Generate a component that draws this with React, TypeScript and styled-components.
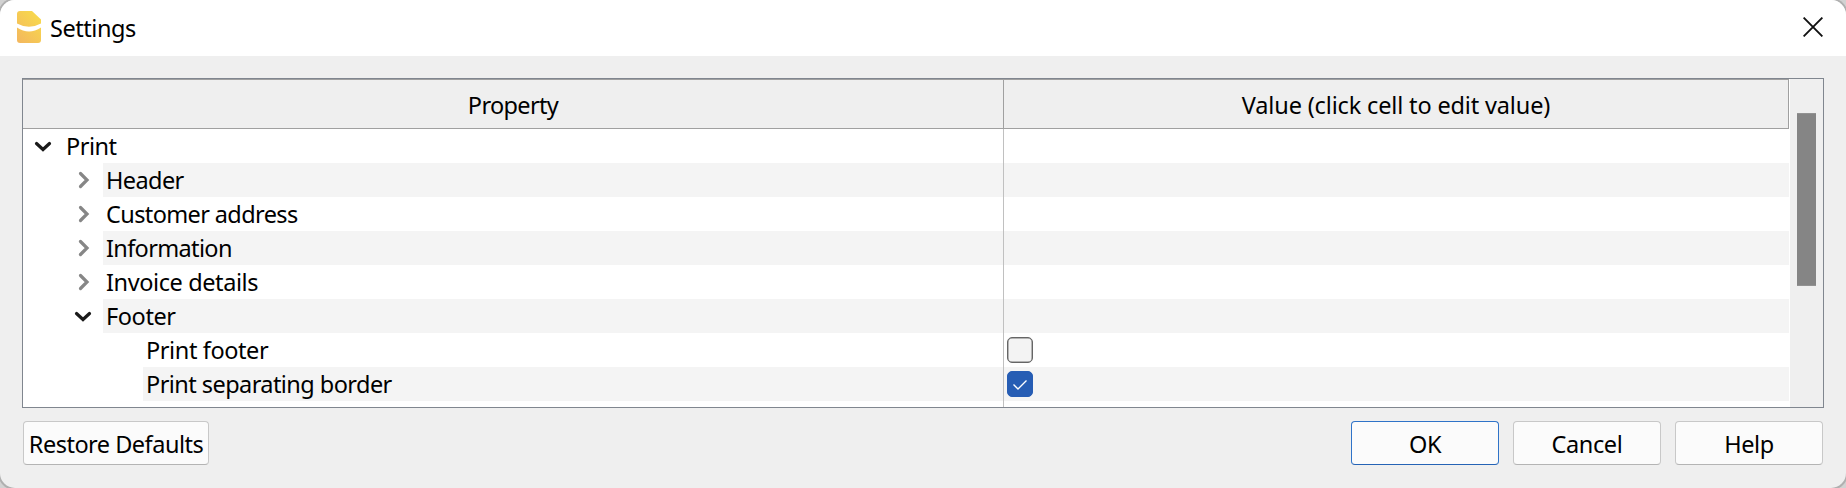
import React from 'react';
import styled, { createGlobalStyle } from 'styled-components';

const GlobalStyle = createGlobalStyle`
  * { box-sizing: border-box; }
  body { margin: 0; background: #d2d2d2; }
`;

const Dialog = styled.div`
  width: 1846px;
  height: 488px;
  display: flex;
  flex-direction: column;
  overflow: hidden;
  border-radius: 15px;
  background: #efefef;
  box-shadow: 0 0 0 2px #b0b0b0;
  color: #000;
  font: 23.5px/34px 'Noto Sans', 'Open Sans', sans-serif;
  white-space: pre;
`;

const TitleBar = styled.header`
  display: flex;
  align-items: center;
  height: 56px;
  flex: none;
  padding: 0 23px 2px 17px;
  background: #fff;
`;

const Logo = styled.svg`
  width: 24px;
  height: 32px;
`;

const Title = styled.span`
  flex: 1;
  margin-left: 9px;
  padding-top: 1px;
`;

const CloseIcon = styled.svg`
  width: 20px;
  height: 20px;
`;

const Label = styled.span<{ $spacing?: number }>`
  letter-spacing: ${(p) => p.$spacing ?? 0}px;
`;

const TreeFrame = styled.main`
  display: flex;
  height: 330px;
  margin: 22px 22px 0;
  border: 1px solid #80868f;
  background: #fff;
`;

const Tree = styled.div`
  width: 1766px;
  margin-right: 1px;
  overflow: hidden;
  display: flex;
  flex-direction: column;
`;

const HeaderRow = styled.div`
  display: grid;
  grid-template-columns: 981px 1fr;
  flex: none;
  height: 50px;
  background: #efefef;
  border-top: 1px solid #a0a0a0;
  border-bottom: 1px solid #a0a0a0;
`;

const HeaderCell = styled.div`
  display: flex;
  align-items: center;
  justify-content: center;
  border-right: 1px solid #a0a0a0;
  padding-top: 1px;
`;

const Row = styled.div`
  display: grid;
  grid-template-columns: 981px 1fr;
  flex: none;
  height: 34px;
`;

const NameCell = styled.div<{ $level: number }>`
  display: flex;
  padding-left: ${(p) => p.$level * 40}px;
  border-right: 1px solid #c0c0c0;
`;

const Branch = styled.span`
  display: flex;
  align-items: center;
  justify-content: center;
  width: 40px;
  flex: none;
`;

const NameText = styled.div<{ $shaded: boolean }>`
  flex: 1;
  padding-left: 3px;
  background: ${(p) => (p.$shaded ? '#f4f4f4' : '#fff')};
`;

const ValueCell = styled.div<{ $shaded: boolean }>`
  padding: 4px 3px;
  background: ${(p) => (p.$shaded ? '#f4f4f4' : '#fff')};
`;

const CheckBox = styled.span<{ $checked: boolean }>`
  display: flex;
  width: 26px;
  height: 26px;
  border-radius: 5px;
  border: 1.5px solid ${(p) => (p.$checked ? '#265db4' : '#666')};
  box-shadow: inset 0 0 0 0.5px ${(p) => (p.$checked ? '#265db4' : '#777')};
  background: ${(p) => (p.$checked ? '#265db4' : '#f3f3f3')};
`;

const ScrollTrack = styled.div`
  flex: 1;
  background: #efefef;
  padding: 34px 0 0 7px;
`;

const ScrollThumb = styled.div`
  width: 19px;
  height: 173px;
  background: #858585;
  border: solid #929292;
  border-width: 1px 0;
`;

const Footer = styled.footer`
  display: flex;
  gap: 14px;
  padding: 13px 23px 0;
`;

const Spacer = styled.div`
  flex: 1;
`;

const Button = styled.button<{ $width?: number; $primary?: boolean }>`
  width: ${(p) => p.$width ?? 148}px;
  height: 44px;
  padding: 1px 0 0;
  font: inherit;
  color: inherit;
  white-space: pre;
  background: #fbfbfb;
  border: 1px solid ${(p) => (p.$primary ? '#2f73c8' : '#c8c8c8')};
  border-bottom-color: ${(p) => (p.$primary ? '#2563b5' : '#b4b4b4')};
  border-radius: 4px;
`;

type Item = {
  name: string;
  level: number;
  spacing: number;
  branch?: 'open' | 'closed';
  checked?: boolean;
};

const items: Item[] = [
  { name: 'Print', level: 0, spacing: -0.5, branch: 'open' },
  { name: 'Header', level: 1, spacing: -0.6, branch: 'closed' },
  { name: 'Customer address', level: 1, spacing: -0.62, branch: 'closed' },
  { name: 'Information', level: 1, spacing: -0.65, branch: 'closed' },
  { name: 'Invoice details', level: 1, spacing: -0.4, branch: 'closed' },
  { name: 'Footer', level: 1, spacing: -0.4, branch: 'open' },
  { name: 'Print footer', level: 2, spacing: -0.4, checked: false },
  { name: 'Print separating border', level: 2, spacing: -0.56, checked: true },
];

const Chevron = ({ open }: { open: boolean }) => (
  <svg width="40" height="34" fill="none" strokeWidth="3.2" strokeLinecap="round">
    {open ? (
      <path d="M13.5 14.500 L20 20.500 L26.500 14.500" stroke="#1a1a1a" />
    ) : (
      <path d="M17.500 10.500 L24 17 L17.500 23.500" stroke="#868686" />
    )}
  </svg>
);

export default function App() {
  return (
    <>
      <GlobalStyle />
      <Dialog>
        <TitleBar>
          <Logo viewBox="0 0 24 32">
            <defs>
              <linearGradient id="logo" x1="0" y1="1" x2="0.8" y2="0">
                <stop offset="0" stopColor="#f3b65f" />
                <stop offset="1" stopColor="#f8da4c" />
              </linearGradient>
            </defs>
            <path d="M3 0H15L24 8.500V29a3 3 0 0 1-3 3H3a3 3 0 0 1-3-3V3a3 3 0 0 1 3-3Z" fill="url(#logo)" />
            <path d="M0 12.500Q12 19 24 12.500V16.500Q12 24.500 0 16.500Z" fill="#fff" />
          </Logo>
          <Title><Label $spacing={-0.45}>Settings</Label></Title>
          <CloseIcon viewBox="0 0 20 20">
            <path d="M.6 .6L19.400 19.400M19.400 .6L.6 19.400" stroke="#111" strokeWidth="1.9" />
          </CloseIcon>
        </TitleBar>
        <TreeFrame>
          <Tree>
            <HeaderRow>
              <HeaderCell><Label $spacing={-0.65}>Property</Label></HeaderCell>
              <HeaderCell><Label $spacing={-0.15}>Value (click cell to edit value)</Label></HeaderCell>
            </HeaderRow>
            {items.map((item, i) => (
              <Row key={item.name}>
                <NameCell $level={item.level}>
                  <Branch>{item.branch && <Chevron open={item.branch === 'open'} />}</Branch>
                  <NameText $shaded={i % 2 === 1}>
                    <Label $spacing={item.spacing}>{item.name}</Label>
                  </NameText>
                </NameCell>
                <ValueCell $shaded={i % 2 === 1}>
                  {item.checked !== undefined && (
                    <CheckBox $checked={item.checked}>
                      {item.checked && (
                        <svg width="24" height="24" fill="none">
                          <path d="M5.500 12.500L10 17L18.500 8.500" stroke="#fff" strokeWidth="1.4" />
                        </svg>
                      )}
                    </CheckBox>
                  )}
                </ValueCell>
              </Row>
            ))}
            <Row>
              <NameCell $level={0} />
            </Row>
          </Tree>
          <ScrollTrack><ScrollThumb /></ScrollTrack>
        </TreeFrame>
        <Footer>
          <Button $width={186}><Label $spacing={-0.5}>Restore Defaults</Label></Button>
          <Spacer />
          <Button $primary><Label $spacing={-0.4}>OK</Label></Button>
          <Button><Label $spacing={-0.4}>Cancel</Label></Button>
          <Button><Label $spacing={-0.4}>Help</Label></Button>
        </Footer>
      </Dialog>
    </>
  );
}
